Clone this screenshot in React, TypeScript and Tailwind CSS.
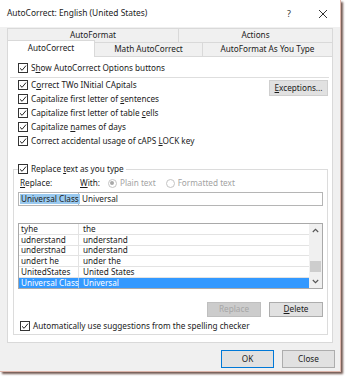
import React from "react";

const Check = () => (
  <span className="w-[10px] h-[10px] border border-[#333] bg-white flex items-center justify-center shrink-0">
    <svg width="8" height="8" viewBox="0 0 8 8">
      <path d="M1 4.3 L3.1 6.3 L7 1.6" fill="none" stroke="#222" strokeWidth="1" />
    </svg>
  </span>
);

const CheckRow = ({ children, className = "" }: { children: React.ReactNode; className?: string }) => (
  <div className={`flex items-center gap-[3px] h-[14px] ${className}`}>
    <Check />
    <span className="whitespace-nowrap">{children}</span>
  </div>
);

const U = ({ children }: { children: React.ReactNode }) => (
  <span className="underline underline-offset-[1px]">{children}</span>
);

const Radio = ({ on }: { on?: boolean }) => (
  <span className="w-[9px] h-[9px] rounded-full border border-[#c4c4c4] bg-white flex items-center justify-center shrink-0">
    {on && <span className="w-[4px] h-[4px] rounded-full bg-[#a8a8a8]" />}
  </span>
);

const rows: [string, string][] = [
  ["tyhe", "the"],
  ["udnerstand", "understand"],
  ["understnad", "understand"],
  ["undert he", "under the"],
  ["UnitedStates", "United States"],
  ["Universal Class", "Universal"],
];

export default function App() {
  return (
    <div className="w-[353px] h-[384px] bg-white font-['Noto_Sans',sans-serif] text-[8.2px] text-[#1b1b1b] leading-none">
      <div className="w-[341px] h-[372px] bg-[#f0f0f0] flex flex-col border-r border-b border-[#dcb5ab] shadow-[2px_2px_2px_rgba(90,60,50,0.85)]">
        {/* title bar */}
        <div className="h-[27px] bg-white flex items-center pl-[7px] pr-[12px] shrink-0">
          <span className="text-[8.4px] text-[#222]">AutoCorrect: English (United States)</span>
          <span className="ml-auto mr-[27px] text-[9px] text-[#333]">?</span>
          <svg width="10" height="10" viewBox="0 0 10 10">
            <path d="M1 1 L9 9 M9 1 L1 9" stroke="#333" strokeWidth="1" />
          </svg>
        </div>

        {/* tabs */}
        <div className="px-[7px] pt-[1px]">
          <div className="flex h-[14px]">
            <div className="w-[172px] border-t border-l border-r border-[#d9d9d9] flex items-center justify-center">AutoFormat</div>
            <div className="flex-1 border-t border-r border-[#d9d9d9] flex items-center justify-center">Actions</div>
          </div>
          <div className="flex h-[14px] items-end">
            <div className="w-[88px] h-[17px] -mb-[1px] -mt-[3px] relative z-10 bg-white border-t border-l border-r border-[#d9d9d9] flex items-center justify-center pb-[1px]">AutoCorrect</div>
            <div className="w-[108px] h-[14px] border-t border-r border-[#d9d9d9] flex items-center justify-center">Math AutoCorrect</div>
            <div className="flex-1 h-[14px] border-t border-r border-[#d9d9d9] flex items-center justify-center">AutoFormat As You Type</div>
          </div>
        </div>

        {/* panel */}
        <div className="mx-[7px] h-[287px] border border-[#d9d9d9] bg-white flex flex-col pt-[4px]">
          <CheckRow className="pl-[10px]">
            S<U>h</U>ow AutoCorrect Options buttons
          </CheckRow>
          <div className="mt-[2px] ml-[2px] mr-[3px] h-px bg-[#dedede]" />
          <div className="flex pl-[10px] pr-[4px]">
            <div className="flex flex-col">
              <CheckRow>
                C<U>o</U>rrect TWo INitial CApitals
              </CheckRow>
              <CheckRow>
                Capitalize first letter of <U>s</U>entences
              </CheckRow>
              <CheckRow>
                Capitalize first letter of table <U>c</U>ells
              </CheckRow>
              <CheckRow>
                Capitalize <U>n</U>ames of days
              </CheckRow>
              <CheckRow>
                Correct accidental usage of cAPS <U>L</U>OCK key
              </CheckRow>
            </div>
            <div className="ml-auto mt-[2px] w-[59px] h-[16px] bg-[#e1e1e1] border border-[#cfcfcf] flex items-center justify-center">
              <span>
                <U>E</U>xceptions...
              </span>
            </div>
          </div>

          <fieldset className="mt-[14px] ml-[5px] mr-[4px] border border-[#dcdcdc] px-[4px] pb-[1px]">
            <legend className="pr-[2px]">
              <CheckRow>
                Replace <U>t</U>ext as you type
              </CheckRow>
            </legend>
            <div className="flex items-center h-[14px]">
              <span className="ml-[2px] w-[60px]">
                <U>R</U>eplace:
              </span>
              <span>
                <U>W</U>ith:
              </span>
              <span className="ml-[8px] flex items-center gap-[3px] text-[#a3a3a3]">
                <Radio on /> Plain text
              </span>
              <span className="ml-[10px] flex items-center gap-[3px] text-[#a3a3a3]">
                <Radio /> Formatted text
              </span>
            </div>
            <div className="mt-[2px] flex h-[14px]">
              <div className="w-[61px] border border-[#b5b5b5] flex items-center pl-[1px]">
                <span className="bg-[#99c9ef] h-[10px] flex items-center px-[1px] whitespace-nowrap">Universal Class</span>
              </div>
              <div className="flex-1 border-y border-r border-[#b5b5b5] flex items-center pl-[3px]">Universal</div>
            </div>

            <div className="mt-[17px] h-[66px] border border-[#a9a9a9] flex">
              <div className="flex-1 flex flex-col">
                {rows.map(([a, b], i) => {
                  const sel = i === rows.length - 1;
                  return (
                    <div
                      key={i}
                      className={`flex-1 flex ${sel ? "bg-[#3399ff] text-white" : "border-b border-[#e3e3e3]"}`}
                    >
                      <div className={`w-[60px] flex items-center pl-[2px] whitespace-nowrap border-r ${sel ? "border-[#9cc9f5]" : "border-[#e3e3e3]"}`}>{a}</div>
                      <div className="flex-1 flex items-center pl-[4px]">{b}</div>
                    </div>
                  );
                })}
              </div>
              <div className="w-[13px] bg-[#f0f0f0] flex flex-col">
                <div className="h-[13px] flex items-center justify-center">
                  <svg width="7" height="5" viewBox="0 0 7 5">
                    <path d="M0.8 4 L3.5 1.3 L6.2 4" fill="none" stroke="#555" strokeWidth="1.1" />
                  </svg>
                </div>
                <div className="flex-1 pt-[24px] px-[1px]">
                  <div className="h-[11px] bg-[#cdcdcd]" />
                </div>
                <div className="h-[13px] flex items-center justify-center">
                  <svg width="7" height="5" viewBox="0 0 7 5">
                    <path d="M0.8 1 L3.5 3.7 L6.2 1" fill="none" stroke="#555" strokeWidth="1.1" />
                  </svg>
                </div>
              </div>
            </div>

            <div className="mt-[13px] flex justify-end gap-[8px] h-[15px]">
              <div className="w-[54px] bg-[#cccccc] border border-[#bfbfbf] text-[#a6a6a6] flex items-center justify-center">Replace</div>
              <div className="w-[54px] bg-[#e1e1e1] border border-[#adadad] flex items-center justify-center">
                <span>
                  <U>D</U>elete
                </span>
              </div>
            </div>
            <CheckRow className="mt-[2px] pl-[2px]">Automatically use suggestions from the spelling checker</CheckRow>
          </fieldset>
        </div>

        {/* bottom buttons */}
        <div className="mt-[7px] flex justify-end gap-[8px] pr-[5px]">
          <div className="w-[53px] h-[18px] bg-[#e1e1e1] border border-[#0078d7] flex items-center justify-center">OK</div>
          <div className="w-[53px] h-[18px] bg-[#e1e1e1] border border-[#adadad] flex items-center justify-center">Close</div>
        </div>
      </div>
    </div>
  );
}
